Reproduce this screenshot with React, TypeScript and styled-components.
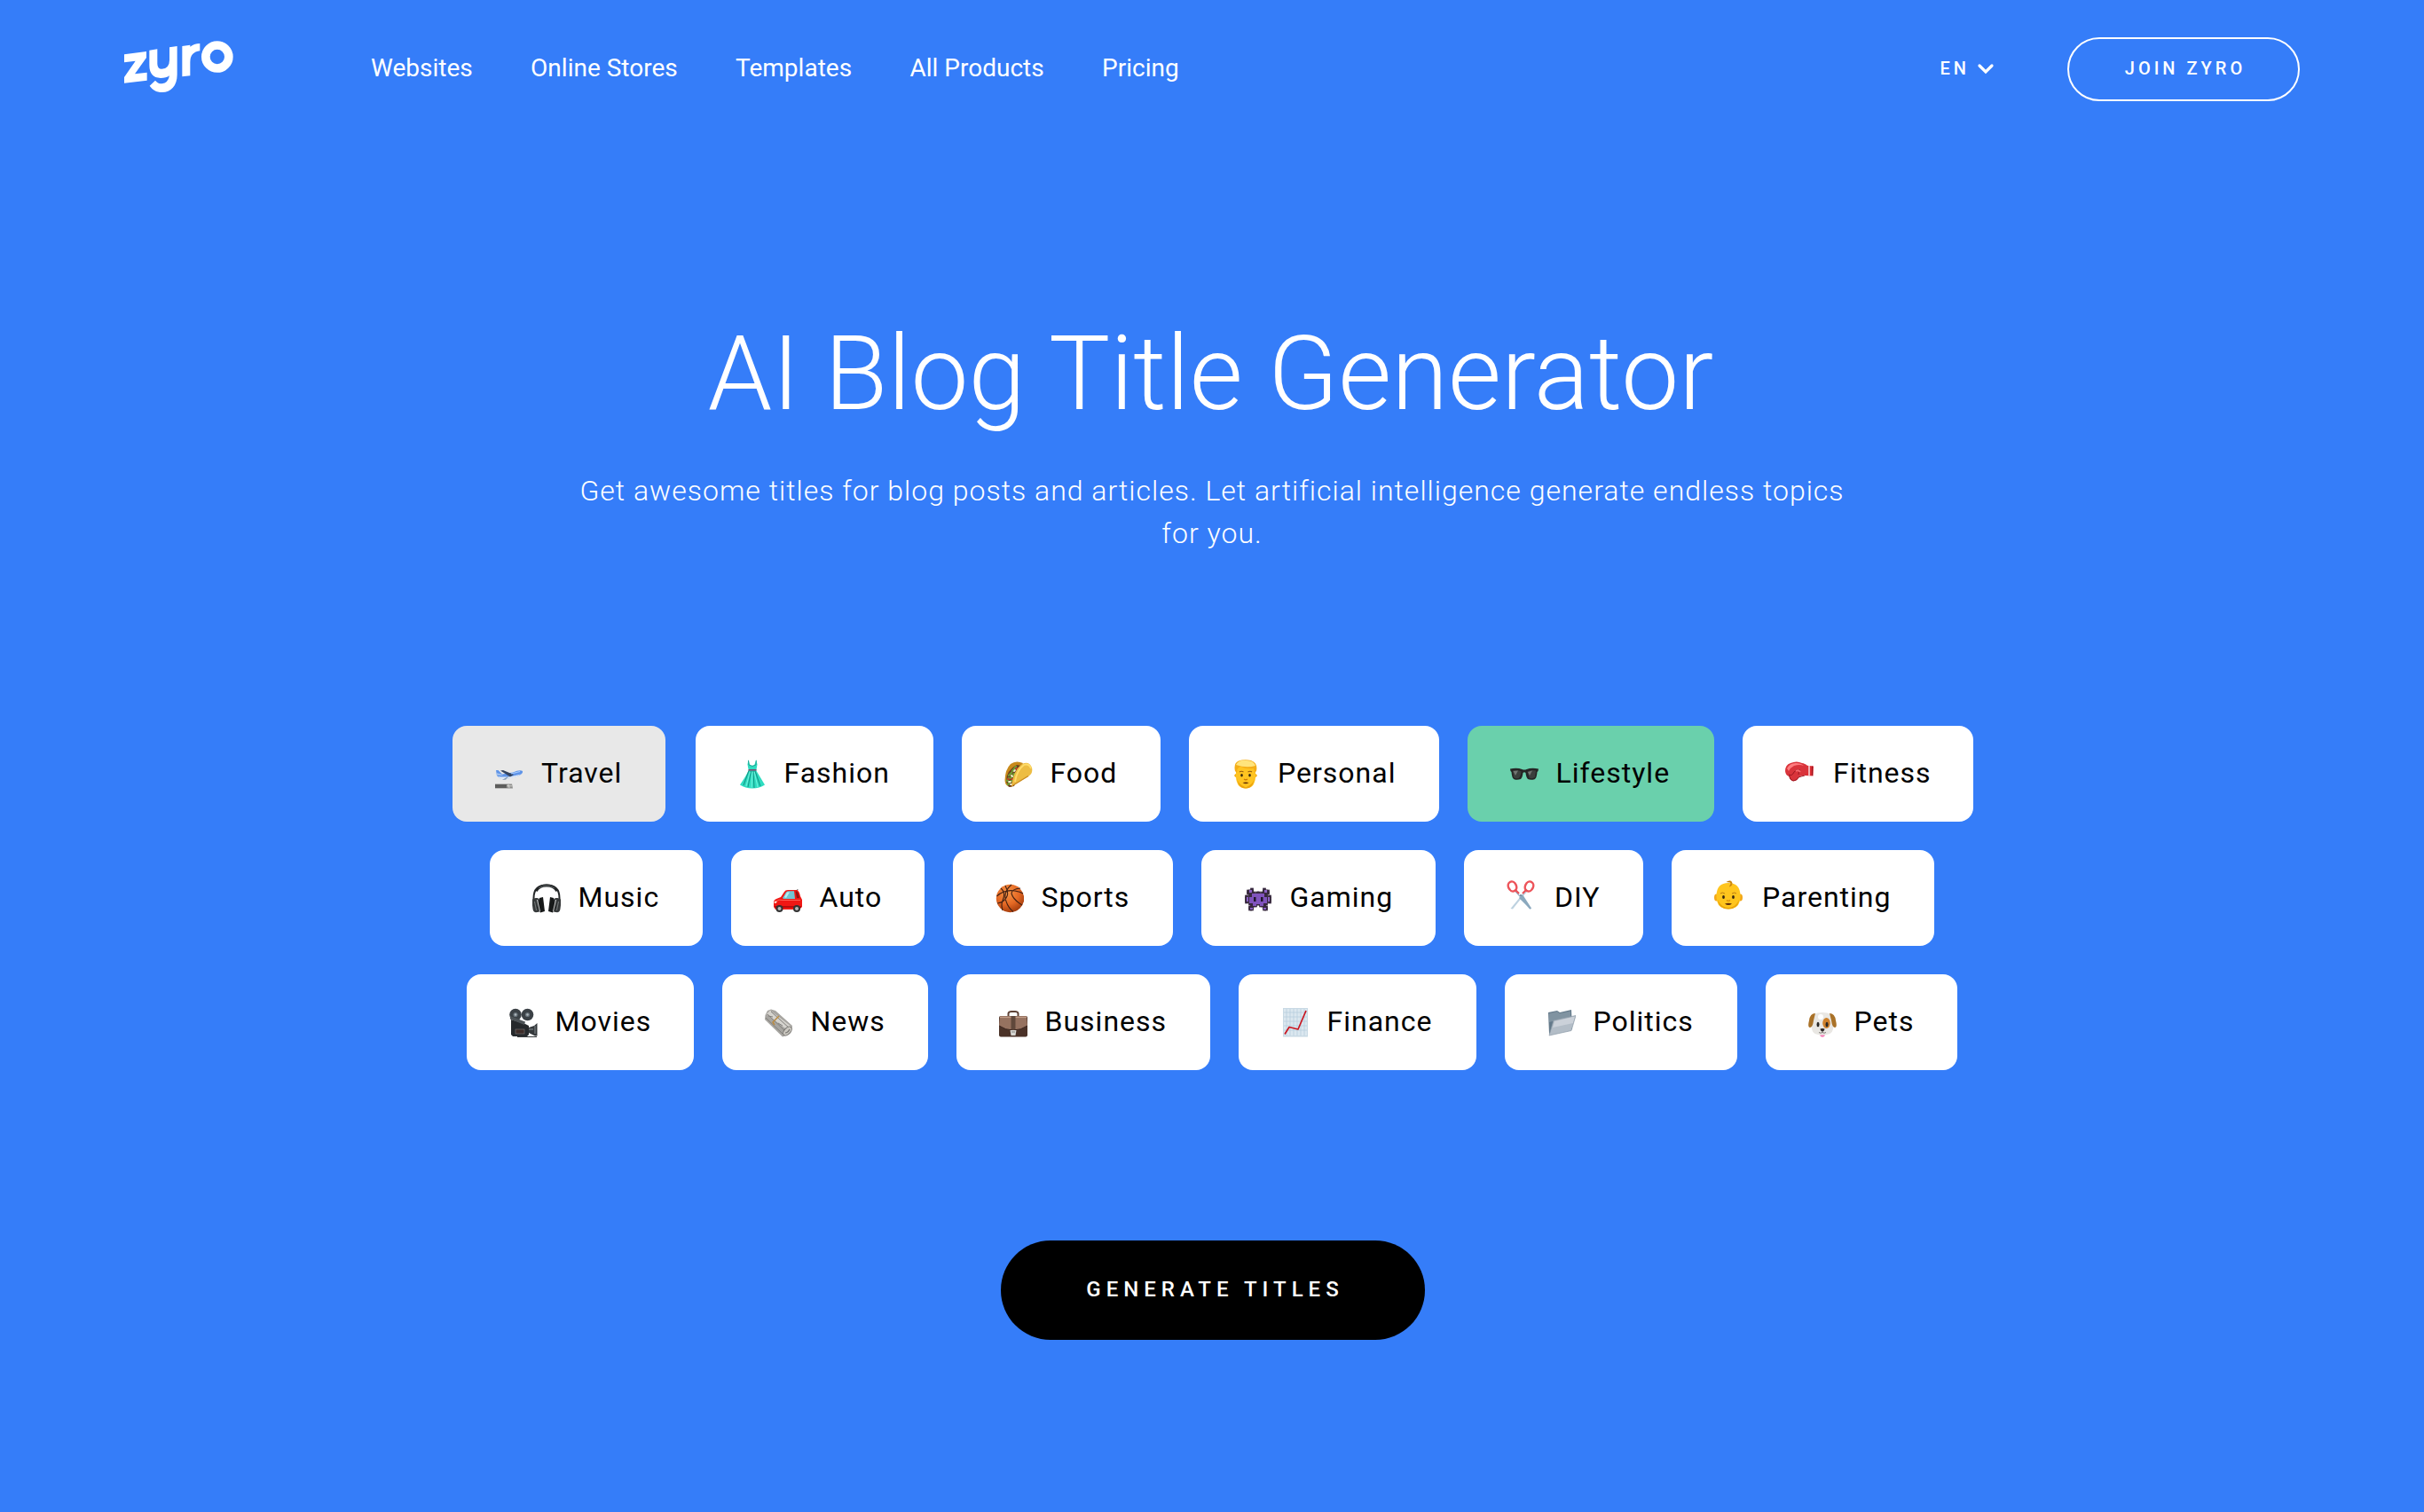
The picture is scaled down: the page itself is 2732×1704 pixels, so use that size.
import React from "react";
import styled, { createGlobalStyle } from "styled-components";

const GlobalStyle = createGlobalStyle`
  *, *::before, *::after { box-sizing: border-box; }
  html, body { margin: 0; padding: 0; background: #357df9; }
  body { font-family: Roboto, "Open Sans", sans-serif; }
  button { font-family: inherit; cursor: pointer; }
`;

const Page = styled.div`
  display: flex;
  flex-direction: column;
  width: 100%;
  min-height: 1704px;
  background: #357df9;
  color: #fff;
`;

const Header = styled.header`
  display: flex;
  align-items: center;
  height: 156px;
  padding: 0 140px 0 130px;
`;

const LogoLink = styled.a`
  display: flex;
  width: 140px;
  height: 75px;
  margin: 0 148px 12px 0;
`;

const Nav = styled.nav`
  display: flex;
  gap: 65.4px;
  padding-bottom: 3px;
`;

const NavLink = styled.a`
  color: #fff;
  font-size: 28px;
  line-height: 40px;
  text-decoration: none;
  white-space: nowrap;
`;

const HeaderActions = styled.div`
  display: flex;
  align-items: center;
  margin-left: auto;
`;

const Language = styled.button`
  display: flex;
  align-items: center;
  gap: 8px;
  margin-right: 82px;
  padding: 0 0 2px;
  border: 0;
  background: none;
  color: #fff;
  font-size: 20px;
  font-weight: 500;
  line-height: 32px;
  letter-spacing: 4px;
`;

const JoinButton = styled.button`
  width: 262px;
  height: 72px;
  padding: 0 0 2px 4px;
  border: 2px solid #fff;
  border-radius: 36px;
  background: transparent;
  color: #fff;
  font-size: 20px;
  font-weight: 500;
  letter-spacing: 4px;
`;

const Main = styled.main`
  display: flex;
  flex-direction: column;
  align-items: center;
`;

const Title = styled.h1`
  margin: 197px 3px 0 0;
  font-size: 116px;
  font-weight: 300;
  line-height: 136px;
  white-space: nowrap;
`;

const Subtitle = styled.p`
  width: 1464px;
  margin: 40px 0 0;
  font-size: 32px;
  font-weight: 300;
  line-height: 48px;
  letter-spacing: 1px;
  text-align: center;
`;

const Categories = styled.div`
  display: flex;
  flex-direction: column;
  align-items: center;
  gap: 32px;
  margin-top: 193px;
`;

const CategoryRow = styled.div`
  display: flex;
  gap: 32px;
`;

type Tone = "plain" | "hovered" | "selected";
const tones: Record<Tone, string> = {
  plain: "#ffffff",
  hovered: "#e8e8e8",
  selected: "#6ad0ac",
};

const Chip = styled.button<{ $tone: Tone; $width: number }>`
  display: flex;
  align-items: center;
  width: ${(p) => p.$width}px;
  height: 108px;
  margin: 0 ${(p) => (p.$tone === "hovered" ? 2 : 0)}px;
  padding: 0 0 0 48px;
  border: 0;
  border-radius: 16px;
  background: ${(p) => tones[p.$tone]};
  color: #000;
  font-size: 32px;
  letter-spacing: 1px;
  white-space: nowrap;
`;

const ChipIcon = styled.span<{ $raised?: boolean; $gap: number }>`
  display: flex;
  flex: none;
  width: 32px;
  height: 32px;
  margin-right: ${(p) => p.$gap}px;
  margin-bottom: ${(p) => (p.$raised ? 8 : 0)}px;
`;

const ChipLabel = styled.span`
  padding-bottom: 2px;
`;

const GenerateButton = styled.button`
  width: 478px;
  height: 112px;
  margin: 192px 0 0 2px;
  padding: 0 0 2px 5px;
  border: 0;
  border-radius: 56px;
  background: #000;
  color: #fff;
  font-size: 24px;
  font-weight: 500;
  letter-spacing: 6px;
`;

const Logo = () => (
  <svg width="140" height="75" viewBox="0 0 420 225" aria-label="zyro">
    <path fill="#fff" d="M30 79 105 69V90L66 145 107 140V167L30 176V156L68 101 30 106Z" />
    <path
      fill="#fff"
      d="M115 65 142 61V110Q142 128 157 128 183 126 183 98V55L209 51V147C209 185 188 207 158 207 138 207 125 198 116 185L135 167Q144 179 158 178 178 176 183 151 172 159 153 159 115 158 115 115Z"
    />
    <path fill="#fff" d="M226 51 253 47V53Q265 43 286 42V67Q253 71 253 105V151L226 154Z" />
    <ellipse cx="344.500" cy="87" rx="39" ry="39" fill="none" stroke="#fff" strokeWidth="29" />
  </svg>
);

const Chevron = () => (
  <svg width="20" height="14" viewBox="0 0 20 14">
    <path d="M3 4 10 11 17 4" fill="none" stroke="#fff" strokeWidth="3.200" strokeLinecap="round" />
  </svg>
);

const Emoji = ({ children }: { children: React.ReactNode }) => (
  <svg width="32" height="33" viewBox="0 0 32 33">
    {children}
  </svg>
);

const Plane = () => (
  <Emoji>
    <path d="M0 27.500H19L20 32.500H0Z" fill="#8d8d8b" />
    <path d="M0 28H13V32H0Z" fill="#5d5d5c" />
    <path d="M13 29.800H19M15 28 16 32" stroke="#e3e3e0" strokeWidth=".8" />
    <path d="M1 12 3.500 12 8 16.500 20 14.500Q28 11 31 13 32 16 25 18.800L12 22.200Q5 22.500 2 18Z" fill="#5f94e8" />
    <path d="M3 19Q14 21 29 16.500 26 19 20 20.500L10 22.700Q5 22 3 19Z" fill="#dfe9f5" />
    <path d="M6 12.500 9 12 21 17 17 19.500Z" fill="#33445f" />
    <path d="M13 20 16 18.500 12 22.500 8 23Z" fill="#8096ae" />
    <path d="M1 15 7 16.500 9 18 2 17.500Z" fill="#a9c6ee" />
    <path d="M18 16 28 13.500" stroke="#a5cbff" strokeWidth="1.100" />
  </Emoji>
);

const Dress = () => (
  <Emoji>
    <path d="M11.500 0 13 5.500Q16 8 18.500 5.500L20.200 0 21.500 5.500 20.300 12.500Q25 20 30 28.500 24 32.500 16 32.500 8 32.500 2 28.500 8 20 11.800 12.500L10.500 5.500Z" fill="#2fdcc0" />
    <path d="M12 12.500 6 29M14.500 13 11 31M17 13 18 32M19 13 25 30" stroke="#149a89" strokeWidth="1.100" />
    <path d="M13.200 14 9 30M16 14 15 31.500M18.200 14 22 31" stroke="#72f4df" strokeWidth="1" />
    <path d="M11.600 11.800H20.500" stroke="#7d466e" strokeWidth="1.600" />
    <path d="M11.500 1 12 6 16 7.500 20 6 20.300 1" fill="none" stroke="#158f82" strokeWidth=".7" />
  </Emoji>
);

const Taco = () => (
  <Emoji>
    <path d="M.500 23Q1 11 7 5 13 .500 21 4L8 31 4 30Q.500 28 .500 23Z" fill="#c88a1b" />
    <path d="M2 25Q2 12 14 6L19 7 11 30 5 31Z" fill="#6b3c20" />
    <path d="M3 24 5 21M5 18 8 15M9 13 13 8M4 28 8 24M7 21 11 16" stroke="#6f9e34" strokeWidth="2.400" strokeLinecap="round" />
    <path d="M5 25 7 25M8 18 9 19M7 28 9 28M11 13 12 12" stroke="#f4ecd2" strokeWidth="1.800" strokeLinecap="round" />
    <path d="M4 22H5M8 22H9M13 10H14" stroke="#c83928" strokeWidth="1.800" strokeLinecap="round" />
    <path d="M8 30.500Q10 11 21 4.500 28 2 31 9 32.500 16 27 19Z" fill="#edbd43" />
    <path d="M12 25Q14 12 22 6 28 4 30 10" fill="none" stroke="#ffdc6b" strokeWidth="1.800" />
    <path d="M9 29.500 27 18.500" stroke="#c98a20" strokeWidth="1.200" />
  </Emoji>
);

const Man = () => (
  <Emoji>
    <ellipse cx="16" cy="18" rx="12.800" ry="4" fill="#f5ad14" />
    <path d="M5 11Q5 3 16 3 27 3 27 11V20Q26 32.500 16 32.500 6 32.500 5 20Z" fill="#ffc421" />
    <path d="M6 20Q7 28 16 31.500 25 28 26 20 24.500 32.500 16 32.500 7.500 32.500 6 20Z" fill="#eba20d" />
    <path d="M4 13Q2 4 8 1.500 14-.500 22 1 30 4 28 13L26 15 25 10Q17 11 10 8 7.500 9 6.500 11L6 15Z" fill="#f4ad17" />
    <path d="M5 6Q8 0 17 1 25 1 27 7 17 10 5 6Z" fill="#ffe47c" />
    <path d="M9 14Q11 12.500 13.500 14M18.500 14Q21 12.500 23 14" fill="none" stroke="#955c10" strokeWidth="1.100" />
    <ellipse cx="11.500" cy="17.700" rx="1.300" ry="1.800" fill="#362810" />
    <ellipse cx="20.500" cy="17.700" rx="1.300" ry="1.800" fill="#362810" />
    <path d="M14 22Q16 23.500 18 22" fill="none" stroke="#cb7a05" strokeWidth="1.300" />
    <path d="M12.500 26Q16 25 19.500 26 16 28.700 12.500 26Z" fill="#633006" />
  </Emoji>
);

const Sunglasses = () => (
  <Emoji>
    <path d="M0 10.500Q8 9 13.500 11 16 12 18.500 11 24 9 32 10.500L31.500 13 30.500 14Q30 21 27.500 22.200 23 23.500 20 22 18 20 17.500 15 16 13.500 14.500 15 14 20 12 22 8 23.500 4.500 22.200 2 21 1.500 14L.500 13Z" fill="#252525" />
    <path d="M3 12.500Q9 11 12.500 13.500 12 19 9.500 21 5 21.500 4 20Z" fill="#3b3f3d" />
    <path d="M19.500 13.500Q24 11 29 12.500L28 20Q25 22 21.500 20.500Z" fill="#3b3f3d" />
    <path d="M3.500 13 9 12.500 6 18ZM20 14 25 12.500 22 18Z" fill="#717572" />
  </Emoji>
);

const Glove = () => (
  <Emoji>
    <path d="M22 6.500 32 7.500 31.500 18.500 22 18Z" fill="#dd2e34" />
    <path d="M27 7V18.300" stroke="#f6dfe0" strokeWidth="1.500" />
    <path d="M30.500 7.500V18" stroke="#96151e" strokeWidth="1" />
    <path d="M0 13Q0 6 6 4 13 1 19 4 25 5 26 9 26 16 21 18L16 19Q14 24.300 9 24.300 5 23.500 4.500 19 .500 18 0 13Z" fill="#d9343b" />
    <path d="M2 10Q5 4 12 4 18 4 21 7 16 5 10 7 6 9 4 13Z" fill="#ff7c7f" />
    <path d="M4 17Q8 19 10 14 13 10 17 12 15 13 15 17M4.500 18Q5 23 9 24 13 24 15 20 18 19 22 18" fill="none" stroke="#9d1721" strokeWidth="1" />
    <path d="M12 13Q15 11 17 14" fill="none" stroke="#f5686d" strokeWidth="1.800" />
  </Emoji>
);

const Headphones = () => (
  <Emoji>
    <path d="M1.500 21V16Q1.500 1.500 16 1.500 30.500 1.500 30.500 16V21" fill="none" stroke="#252829" strokeWidth="2" />
    <path d="M4 8Q8 2 16 2 24 2 28 8" fill="none" stroke="#202324" strokeWidth="3.200" />
    <path d="M7 5Q16-1 25 5" fill="none" stroke="#707677" strokeWidth=".8" />
    <rect x="0" y="16" width="9" height="16" rx="4" fill="#36393a" transform="rotate(-8 5 24)" />
    <rect x="23" y="16" width="9" height="16" rx="4" fill="#36393a" transform="rotate(8 27 24)" />
    <path d="M8 16 12 15 14 31 9 32.500 6 27Z" fill="#171919" />
    <path d="M24 16 20 15 18 31 23 32.500 26 27Z" fill="#171919" />
    <path d="M5.500 18 8.500 31M26.500 18 23.500 31" stroke="#d0d2d2" strokeWidth="1" />
    <path d="M2.500 20 4.500 30M29.500 20 27.500 30" stroke="#767a7b" strokeWidth="1" />
  </Emoji>
);

const Car = () => (
  <Emoji>
    <path d="M26 10 27 6" stroke="#333" strokeWidth=".8" />
    <path d="M0 21Q0 18 3 17L8 15 12 9Q13 7 16 7H26Q29 8 30 14L32 18V26L29 29H2L0 26Z" fill="#f01714" />
    <path d="M10 16 14 9.500Q15 8.200 17 8.200H23L24 17H11Z" fill="#70c5d2" />
    <path d="M12 15 15 9.500H18L14 16Z" fill="#b5edf0" />
    <path d="M24.500 8.500H26Q28 10 29 16H26Z" fill="#8e1515" />
    <path d="M2 20Q6 17 10 18.500H30" fill="none" stroke="#ff7464" strokeWidth=".8" />
    <path d="M1 26H31" stroke="#a60808" strokeWidth="1.500" />
    <circle cx="6.500" cy="28" r="4" fill="#333" /><circle cx="6.500" cy="28" r="2" fill="#b6b6b6" />
    <circle cx="26" cy="28" r="4" fill="#333" /><circle cx="26" cy="28" r="2" fill="#b6b6b6" />
    <path d="M1 19.500 4 20 2.500 22H.500Z" fill="#ffd4c8" />
  </Emoji>
);

const Basketball = () => (
  <Emoji>
    <defs>
      <radialGradient id="ball" cx="40%" cy="30%" r="70%"><stop stopColor="#f89748" /><stop offset=".6" stopColor="#e46824" /><stop offset="1" stopColor="#a93f0e" /></radialGradient>
    </defs>
    <circle cx="16.500" cy="16.500" r="15.700" fill="url(#ball)" />
    <path d="M1.500 14Q10 6 22 8 28 9 31 11M11 2Q15 10 13 14 10 21 2 22M18 1Q10 8 11 16 13 26 20 31.500M28 5Q18 6 18 11 20 18 30 24M6 5Q12 10 8 19 6 24 8 30" fill="none" stroke="#422013" strokeWidth="1.100" />
  </Emoji>
);

const invader = [
  "...X......X...",
  ".XXX......XXX.",
  ".X.XX.XX.XX.X.",
  "..XXXXXXXXXX..",
  "X.XXXXXXXXXX.X",
  "XXXX.XXXX.XXXX",
  "XXXX.XXXX.XXXX",
  "X.XXXXXXXXXX.X",
  "..XXXXXXXXXX..",
  "...XXX..XXX...",
  "..XX......XX..",
  "..XX......XX..",
];

const Invader = () => (
  <Emoji>
    <g fill="#38283f" stroke="#38283f" strokeWidth="1.700">
      {invader.map((line, y) => [...line].map((c, x) => c === "X" && <rect key={`${x}-${y}`} x={2 + x * 2} y={5.500 + y * 2} width="2" height="2" />))}
    </g>
    <path d="M9 11H23V15H26V22H22V25H18V23H14V25H10V22H6V15H9Z" fill="#8053bd" />
    <path d="M6 7H9V10H6ZM23 7H26V10H23ZM7 27H10V29H7ZM22 27H25V29H22ZM3 15H5V20H3ZM27 15H29V20H27Z" fill="#8b61c5" />
    <path d="M11 15H13.500V20H11ZM19 15H21.500V20H19Z" fill="#20172b" />
  </Emoji>
);

const Scissors = () => (
  <Emoji>
    <path d="M10 11 19 22 28 32 26 32.500Q18 22 9.500 13Z" fill="#94b0c5" />
    <path d="M22 11 13.500 21 4.500 32 7 32.500Q16 21 23 13Z" fill="#bed2e0" />
    <path d="M14 20 18 16 28 31.500 26.500 32.500Z" fill="#8ba9be" />
    <ellipse cx="6.500" cy="7" rx="4.500" ry="5.700" transform="rotate(-24 6.500 7)" fill="none" stroke="#ed545a" strokeWidth="2.500" />
    <ellipse cx="25.500" cy="7" rx="4.500" ry="5.700" transform="rotate(24 25.500 7)" fill="none" stroke="#ed545a" strokeWidth="2.500" />
    <path d="M10 11 14 15M22 11 18 15" stroke="#e85259" strokeWidth="2.200" />
    <circle cx="16" cy="17" r="1" fill="#60798b" />
  </Emoji>
);

const Baby = () => (
  <Emoji>
    <ellipse cx="2.500" cy="19.500" rx="2.500" ry="4" fill="#f3a819" />
    <ellipse cx="29.500" cy="19.500" rx="2.500" ry="4" fill="#f3a819" />
    <path d="M2.500 17Q3 3 16 3 29 3 29.500 17 30 32.500 16 32.500 2 32.500 2.500 17Z" fill="#ffc51e" />
    <path d="M4 22Q8 31 16 31 24 31 28 22 27 32.500 16 32.500 5 32.500 4 22Z" fill="#eba50b" />
    <path d="M13.500 2Q18-1 20 2 21 6 17 7 20 3 17.500 2.500Z" fill="#b8740b" />
    <path d="M17 7Q22 5 18 1" fill="none" stroke="#d18b11" strokeWidth="1.200" />
    <path d="M7 15Q9 13 12 15M20 15Q23 13 25 15" fill="none" stroke="#bb7b12" strokeWidth="1" />
    <ellipse cx="10.500" cy="19" rx="1.400" ry="2" fill="#352510" />
    <ellipse cx="21.500" cy="19" rx="1.400" ry="2" fill="#352510" />
    <path d="M14 22.500Q16 24 18 22.500" fill="none" stroke="#d38609" strokeWidth="1.200" />
    <path d="M12 26.500Q16 25 20 26.500 16 29.500 12 26.500Z" fill="#5c2a0b" />
  </Emoji>
);

const MovieCamera = () => (
  <Emoji>
    <path d="M2 13 18 18 22 20V30L20 32H4L2 30Z" fill="#26292c" />
    <circle cx="7" cy="7.500" r="6.800" fill="#3b4146" /><circle cx="20.500" cy="7.500" r="6.800" fill="#3b4146" />
    <circle cx="7" cy="7.500" r="2.600" fill="#68727a" /><circle cx="20.500" cy="7.500" r="2.600" fill="#68727a" />
    <circle cx="7" cy="7.500" r="1.200" fill="#aeb7bc" /><circle cx="20.500" cy="7.500" r="1.200" fill="#aeb7bc" />
    <path d="M1 9 18 15.500 17 19 1 12.500Z" fill="#4d5357" />
    <path d="M22 22 28 20 31.500 17V31.500H29L22 28Z" fill="#34383b" />
    <path d="M29 20V29M22 24H27" stroke="#848b90" strokeWidth="1" />
    <rect x="7" y="24" width="10" height="5" fill="#3d2c29" stroke="#777" strokeWidth=".6" />
    <path d="M9 32.500H31" stroke="#34383a" strokeWidth="1" />
  </Emoji>
);

const Newspaper = () => (
  <Emoji>
    <path d="M.500 8 3 3 7 1.500 12 3 31 20 30 25 26 30 20 32.500 0 13Z" fill="#a7a5a1" />
    <path d="M2 7 6 2.500 30 21 27 26Z" fill="#d5d3ce" />
    <path d="M3 7 24 27M7 4 28 23M1 11 20 29M4 9 9 10M15 17 20 20" stroke="#82807c" strokeWidth="1" />
    <path d="M11 19 9 16 16 9" fill="none" stroke="#ba8b40" strokeWidth="1.500" />
    <ellipse cx="25.500" cy="26" rx="3.500" ry="6" transform="rotate(43 25.500 26)" fill="#cac7c0" stroke="#777571" strokeWidth="1" />
    <path d="M23 28Q26 28 28 24" fill="none" stroke="#777571" strokeWidth="1.200" />
  </Emoji>
);

const Briefcase = () => (
  <Emoji>
    <path d="M10.500 9V6Q11 4 14 4H18Q21 4 21.500 6V9" fill="none" stroke="#5f4337" strokeWidth="2" />
    <rect x="0" y="9" width="32" height="23.500" rx="2" fill="#4b3228" />
    <path d="M1 9H31L32 20Q25 25 16 25 7 25 0 20Z" fill="#967260" />
    <path d="M0 20Q7 25 16 25 25 25 32 20" fill="none" stroke="#37231c" strokeWidth="1" />
    <path d="M1 10.500H31" stroke="#c09c86" strokeWidth="1.200" />
    <path d="M13.500 9H18.500V24H13.500Z" fill="#60483b" />
    <path d="M12.500 25H19.500L18.500 31H13.500Z" fill="#d7d6d2" />
    <path d="M14 27H18" stroke="#858581" strokeWidth="1" />
  </Emoji>
);

const Chart = () => (
  <Emoji>
    <rect x="2" y="0" width="28" height="32.500" fill="#c8d9e4" />
    <path d="M3 1H29V31H3Z" fill="#dbe7ef" />
    <path d="M6 1V31M10 1V31M14 1V31M18 1V31M22 1V31M26 1V31M3 5H29M3 10H29M3 15H29M3 20H29M3 25H29" stroke="#b5ccdc" strokeWidth=".7" />
    <path d="M4 29.500 9 21.500 19 24 28 3" fill="none" stroke="#c91620" strokeWidth="1.700" strokeLinejoin="round" />
  </Emoji>
);

const Folder = () => (
  <Emoji>
    <path d="M1 5 11 3 14 5 27 2 28 24 2 29Z" fill="#63798a" />
    <path d="M2 6 11 4 14 6 26 3.500V10L2 16Z" fill="#8093a1" />
    <path d="M7 14 32 8.500 27 25.500 2 31Z" fill="#b3bdc7" />
    <path d="M8 15 31 9.500 29 17 6 22Z" fill="#cbd1d9" />
    <path d="M7 14 32 8.500 27 25.500 2 31Z" fill="none" stroke="#8d9ba8" strokeWidth=".7" />
  </Emoji>
);

const Dog = () => (
  <Emoji>
    <path d="M13 28H19.500L18.500 31.500Q16 34 13.500 31.500Z" fill="#f67bb7" />
    <path d="M7 7Q10 5 16 5 22 5 25 7 28 12 28 20 29 29 21 30 16 31 11 30 3 29 4 20 4 12 7 7Z" fill="#e9e7e3" />
    <path d="M8 6Q2 6 1 14-1 22 2 22 5 22 6 14Z" fill="#aa7228" />
    <path d="M24 6Q30 6 31 14 33 22 30 22 27 22 26 14Z" fill="#aa7228" />
    <ellipse cx="20.500" cy="17" rx="4.300" ry="6" fill="#ce812c" />
    <ellipse cx="11" cy="18.500" rx="1.500" ry="2.800" fill="#292725" />
    <ellipse cx="21" cy="18.500" rx="1.500" ry="2.800" fill="#292725" />
    <path d="M13.500 23.500Q16 22.500 18.500 23.500 18 26.500 16 26.500 14 26.500 13.500 23.500Z" fill="#2b2524" />
    <path d="M16 26V27.500M12 27.500Q14 29 16 27.500 18 29 20 27.500" fill="none" stroke="#645e59" strokeWidth=".8" />
    <ellipse cx="14" cy="10" rx="3" ry="3" fill="#fff" />
  </Emoji>
);

interface Category {
  label: string;
  icon: React.ComponentType;
  width: number;
  tone?: Tone;
  raised?: boolean;
  gap?: number;
}

const rows: Category[][] = [
  [
    { label: "Travel", icon: Plane, width: 240, tone: "hovered", gap: 20 },
    { label: "Fashion", icon: Dress, width: 268 },
    { label: "Food", icon: Taco, width: 224 },
    { label: "Personal", icon: Man, width: 282, gap: 20 },
    { label: "Lifestyle", icon: Sunglasses, width: 278, tone: "selected" },
    { label: "Fitness", icon: Glove, width: 260, gap: 22 },
  ],
  [
    { label: "Music", icon: Headphones, width: 240 },
    { label: "Auto", icon: Car, width: 218 },
    { label: "Sports", icon: Basketball, width: 248 },
    { label: "Gaming", icon: Invader, width: 264 },
    { label: "DIY", icon: Scissors, width: 202, raised: true, gap: 22 },
    { label: "Parenting", icon: Baby, width: 296, raised: true, gap: 22 },
  ],
  [
    { label: "Movies", icon: MovieCamera, width: 256 },
    { label: "News", icon: Newspaper, width: 232 },
    { label: "Business", icon: Briefcase, width: 286 },
    { label: "Finance", icon: Chart, width: 268 },
    { label: "Politics", icon: Folder, width: 262 },
    { label: "Pets", icon: Dog, width: 216 },
  ],
];

const links = ["Websites", "Online Stores", "Templates", "All Products", "Pricing"];

export default function App() {
  return (
    <>
      <GlobalStyle />
      <Page>
        <Header>
          <LogoLink><Logo /></LogoLink>
          <Nav>
            {links.map((link) => <NavLink key={link}>{link}</NavLink>)}
          </Nav>
          <HeaderActions>
            <Language>EN<Chevron /></Language>
            <JoinButton>JOIN ZYRO</JoinButton>
          </HeaderActions>
        </Header>
        <Main>
          <Title>AI Blog Title Generator</Title>
          <Subtitle>
            Get awesome titles for blog posts and articles. Let artificial intelligence generate endless topics for you.
          </Subtitle>
          <Categories>
            {rows.map((row) => (
              <CategoryRow key={row[0].label}>
                {row.map(({ label, icon: Icon, width, tone = "plain", raised, gap = 19.5 }) => (
                  <Chip key={label} $tone={tone} $width={width}>
                    <ChipIcon $raised={raised} $gap={gap}><Icon /></ChipIcon>
                    <ChipLabel>{label}</ChipLabel>
                  </Chip>
                ))}
              </CategoryRow>
            ))}
          </Categories>
          <GenerateButton>GENERATE TITLES</GenerateButton>
        </Main>
      </Page>
    </>
  );
}
